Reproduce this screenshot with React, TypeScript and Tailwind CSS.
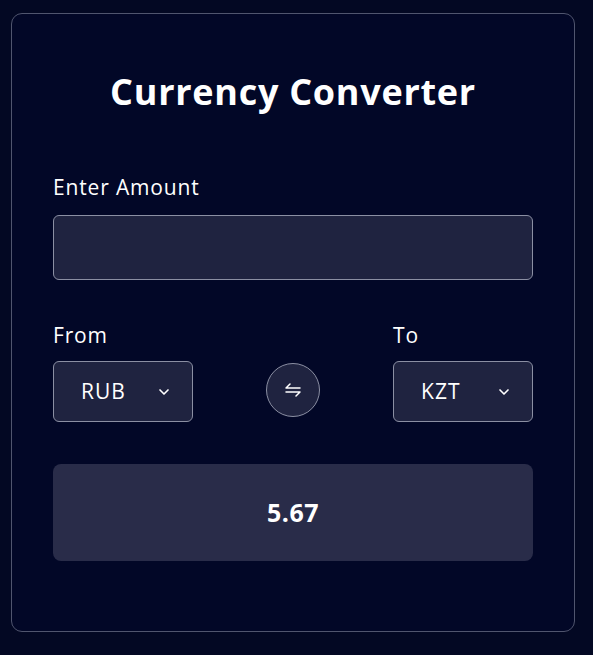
import React, { useState } from 'react';
import { ChevronDown } from 'lucide-react';

const font = { fontFamily: '"Open Sans", "Noto Sans", sans-serif' };

const SwapIcon: React.FC = () => (
  <svg width="18" height="14" viewBox="0 0 18 14" fill="none" stroke="white" strokeWidth="1.5" strokeLinecap="round" strokeLinejoin="round">
    <path d="M16 5H2l4-4" />
    <path d="M2 9h14l-4 4" />
  </svg>
);

const Select: React.FC<{ value: string }> = ({ value }) => (
  <div className="flex h-[61px] w-[140px] items-center justify-between rounded-md border border-[#8b8fa3] bg-[#1f2340] pl-[27px] pr-[20px]">
    <span className="text-[21px] font-medium tracking-[0.05em] text-white">{value}</span>
    <ChevronDown className="h-4 w-4 text-white" strokeWidth={2.5} />
  </div>
);

const App: React.FC = () => {
  const [amount, setAmount] = useState('');

  return (
    <div className="min-h-screen bg-[#030823] px-[11px] pt-[13px] pb-[24px]" style={font}>
      <div className="h-[619px] w-[564px] rounded-[11px] border border-[#50556e] bg-[#020727] px-[41px] pt-[57px]">
        <h1 className="text-center text-[36px] font-bold leading-[42px] tracking-[0.02em] text-white">
          Currency Converter
        </h1>

        <label className="mt-[60px] block text-[21px] font-medium leading-[28px] tracking-[0.04em] text-white">
          Enter Amount
        </label>
        <input
          value={amount}
          onChange={(e) => setAmount(e.target.value)}
          className="mt-[14px] block h-[65px] w-full rounded-md border border-[#8b8fa3] bg-[#1f2340] px-4 text-[20px] text-white outline-none"
        />

        <div className="mt-[41px] flex items-end justify-between">
          <div>
            <div className="mb-[12px] text-[21px] font-medium leading-[28px] tracking-[0.04em] text-white">From</div>
            <Select value="RUB" />
          </div>
          <button className="mb-[5px] flex h-[54px] w-[54px] items-center justify-center rounded-full border border-[#8b8fa3] bg-[#1f2340]">
            <SwapIcon />
          </button>
          <div>
            <div className="mb-[12px] text-[21px] font-medium leading-[28px] tracking-[0.04em] text-white">To</div>
            <Select value="KZT" />
          </div>
        </div>

        <div className="mt-[42px] flex h-[97px] items-center justify-center rounded-lg bg-[#292c49]">
          <span className="text-[25px] font-bold tracking-[0.02em] text-white">5.67</span>
        </div>
      </div>
    </div>
  );
};

export default App;
